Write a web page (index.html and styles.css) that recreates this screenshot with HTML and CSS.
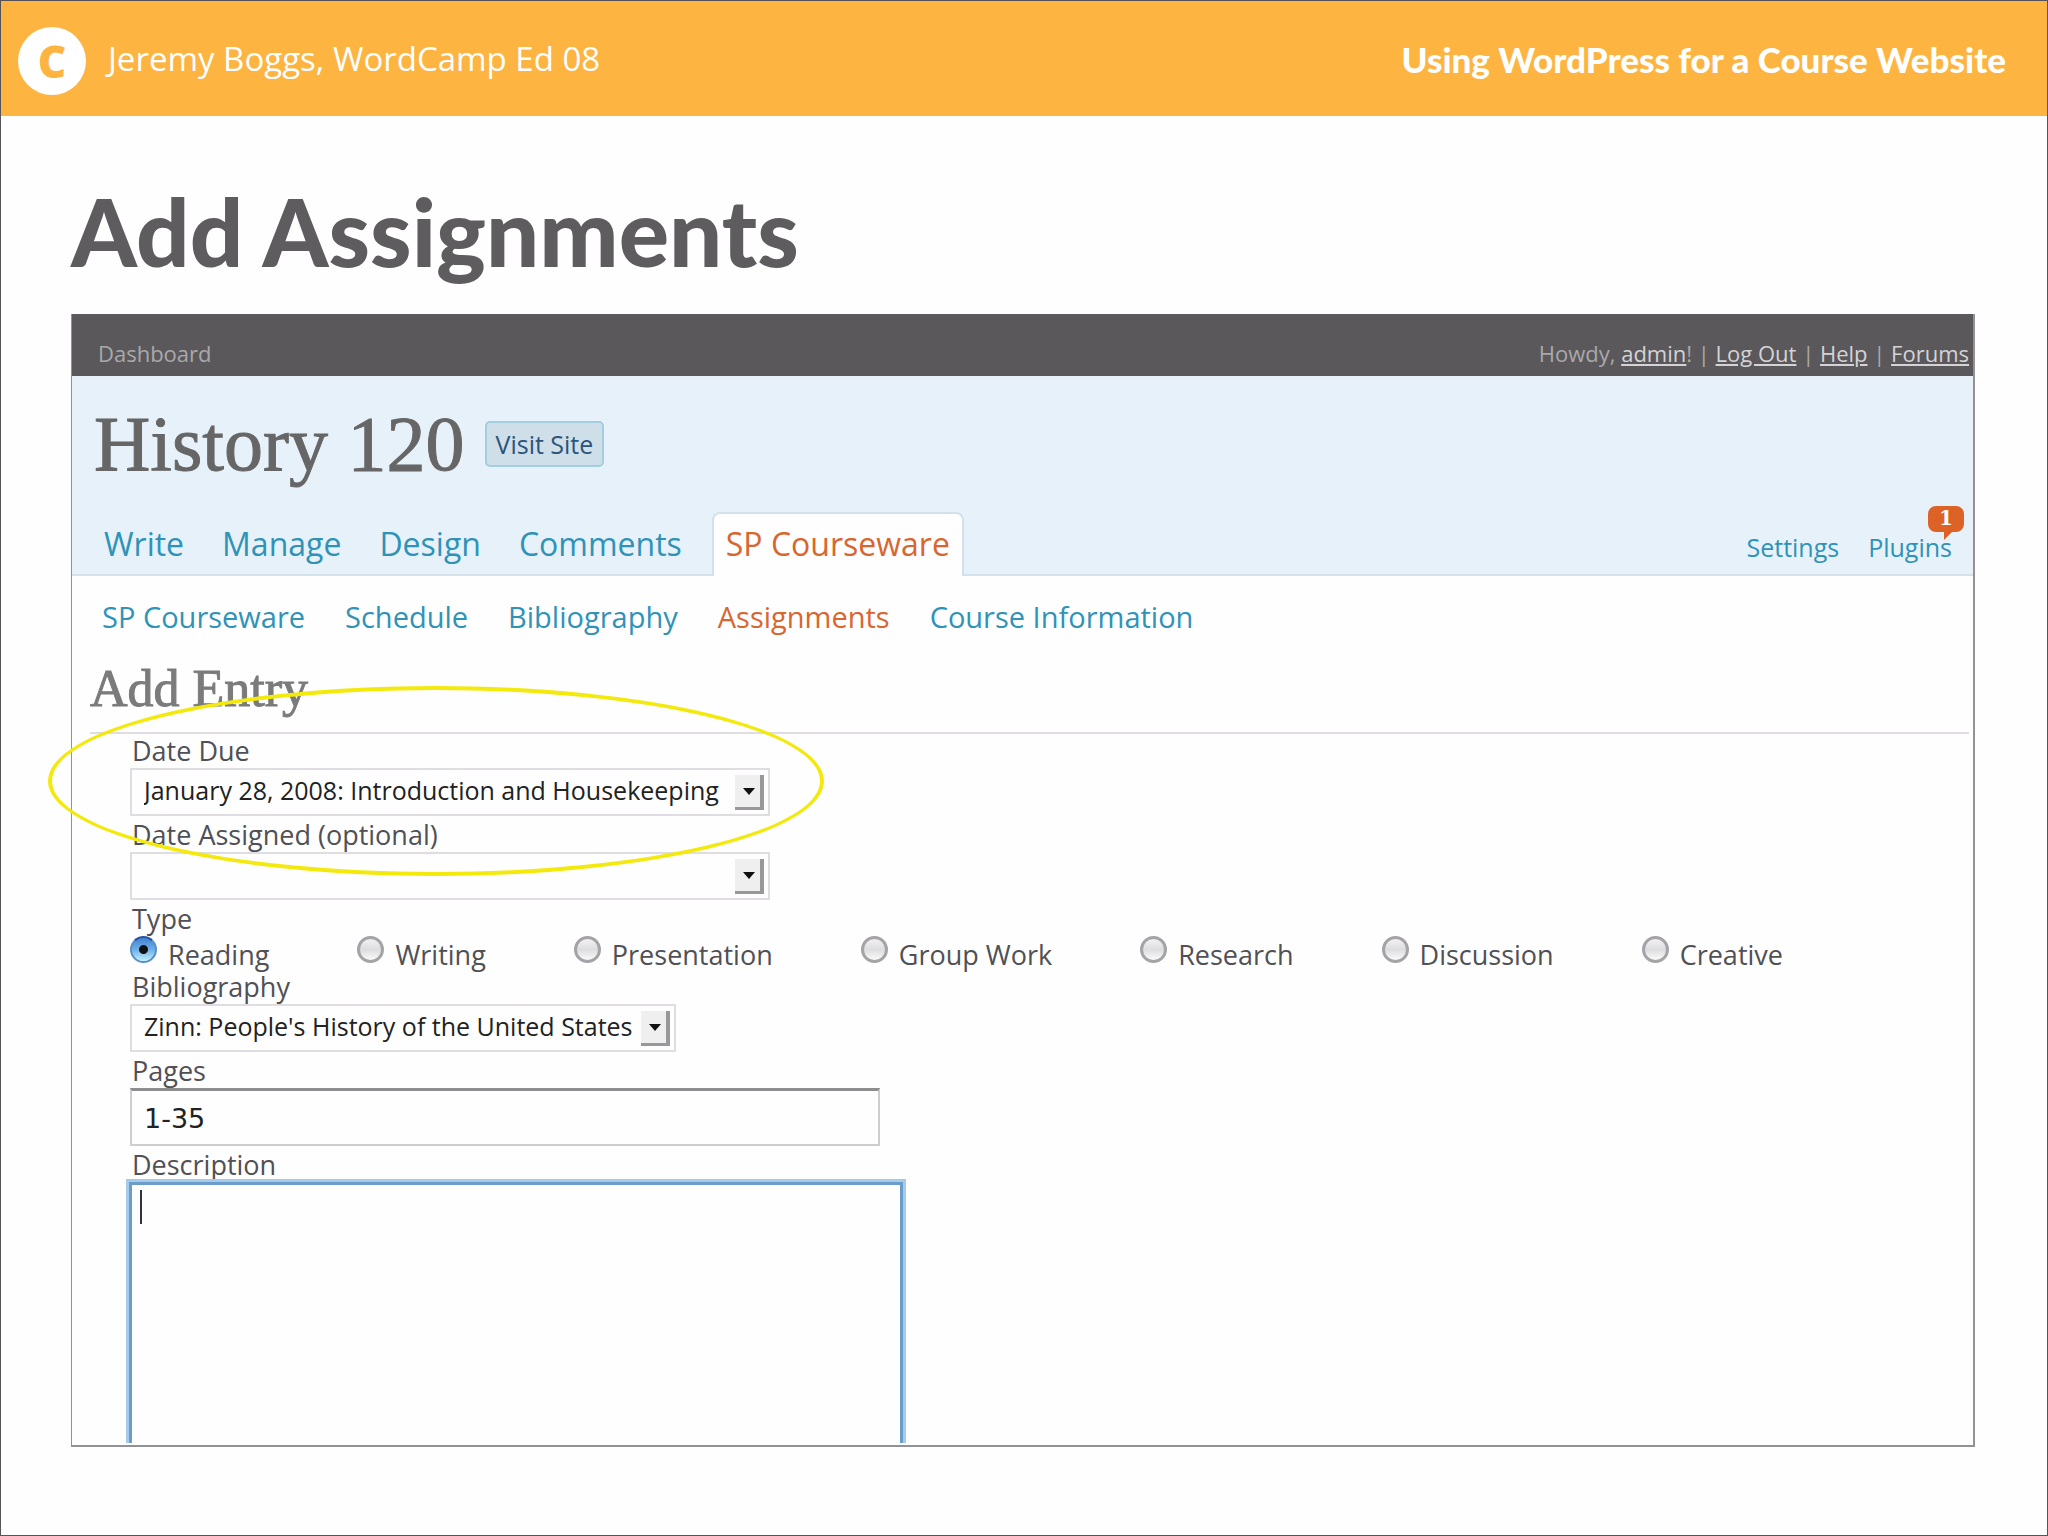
FILE: index.html
```html
<!DOCTYPE html>
<html lang="en">
<head>
  <meta charset="UTF-8"/>
  <meta name="viewport" content="width=device-width,initial-scale=1"/>
  <title>Add Assignments</title>
  <link rel="stylesheet" href="styles.css">
</head>
<body>
  <header class="banner">
    <span class="logo">C</span>
    <p class="speaker">Jeremy Boggs, WordCamp Ed 08</p>
    <p class="talk">Using WordPress for a Course Website</p>
  </header>

  <main class="slide">
    <h1>Add Assignments</h1>

    <div class="screen">
      <div class="topbar">
        <a class="dashboard" href="#">Dashboard</a>
        <p class="user">Howdy, <a href="#">admin</a>! | <a href="#">Log Out</a> | <a href="#">Help</a> | <a href="#">Forums</a></p>
      </div>

      <div class="masthead">
        <div class="site">
          <h2>History 120</h2>
          <button type="button">Visit Site</button>
        </div>
        <nav class="menu">
          <a href="#">Write</a>
          <a href="#">Manage</a>
          <a href="#">Design</a>
          <a href="#">Comments</a>
          <a href="#" class="current">SP Courseware</a>
          <div class="side">
            <a href="#">Settings</a>
            <a href="#" class="plugins">Plugins<span class="badge">1</span></a>
          </div>
        </nav>
      </div>

      <nav class="submenu">
        <a href="#">SP Courseware</a>
        <a href="#">Schedule</a>
        <a href="#">Bibliography</a>
        <a href="#" class="current">Assignments</a>
        <a href="#">Course Information</a>
      </nav>

      <h3>Add Entry</h3>

      <form class="entry">
        <label for="due">Date Due</label>
        <div class="select">
          <select id="due">
            <option>January 28, 2008: Introduction and Housekeeping</option>
          </select>
        </div>

        <label for="assigned">Date Assigned (optional)</label>
        <div class="select">
          <select id="assigned">
            <option></option>
          </select>
        </div>

        <p class="caption" id="typeLabel">Type</p>
        <div class="types" role="radiogroup" aria-labelledby="typeLabel">
          <label><input type="radio" name="type" checked> Reading</label>
          <label><input type="radio" name="type"> Writing</label>
          <label><input type="radio" name="type"> Presentation</label>
          <label><input type="radio" name="type"> Group Work</label>
          <label><input type="radio" name="type"> Research</label>
          <label><input type="radio" name="type"> Discussion</label>
          <label><input type="radio" name="type"> Creative</label>
        </div>

        <label for="biblio">Bibliography</label>
        <div class="select short">
          <select id="biblio">
            <option>Zinn: People's History of the United States</option>
          </select>
        </div>

        <label for="pages">Pages</label>
        <input type="text" id="pages" value="1-35">

        <label for="description">Description</label>
        <div class="editor">
          <textarea id="description"></textarea>
          <span class="caret"></span>
        </div>

        <!-- highlight drawn over the date fields -->
        <div class="highlight"></div>
      </form>
    </div>
  </main>
</body>
</html>
```

FILE: styles.css
```css
:root {
  --orange: #fdb441;
  --heading: #5f5c60;
  --bar: #5a585b;
  --blue: #e7f1fa;
  --link: #2f93b8;
  --active: #d9662f;
  --line: #dfdde2;
  --frame: #929296;
  --text: #505055;
  --edge: #555357;
}

*,
*::before,
*::after {
  box-sizing: border-box;
  margin: 0;
  padding: 0;
}

body {
  display: flex;
  flex-direction: column;
  min-height: 100vh;
  border: 1px solid var(--edge);
  background: #fefefe;
  color: var(--text);
  font-family: "Open Sans", "Noto Sans", sans-serif;
  font-size: 27px;
}

a {
  color: var(--link);
  text-decoration: none;
}

.banner {
  display: flex;
  align-items: center;
  height: 115px;
  padding: 0 41px 0 17px;
  background: var(--orange);
  color: #fff;
  font-size: 33px;
}

.logo {
  display: flex;
  align-items: center;
  justify-content: center;
  width: 68px;
  height: 68px;
  margin: 4px 22px 0 0;
  border-radius: 50%;
  background: #fff;
  color: var(--orange);
  font-size: 44px;
  font-weight: 800;
}

.talk {
  margin-left: auto;
  font-family: Lato, sans-serif;
  font-size: 35px;
  font-weight: 900;
}

.slide {
  flex: 1;
  display: flex;
  flex-direction: column;
  padding: 60px 72px 88px 70px;
}

.slide h1 {
  height: 138px;
  color: var(--heading);
  font-family: Lato, sans-serif;
  font-size: 94px;
  font-weight: 900;
  line-height: 110px;
}

.screen {
  flex: 1;
  display: flex;
  flex-direction: column;
  border: solid var(--frame);
  border-width: 0 2px 2px 1px;
}

.topbar {
  display: flex;
  justify-content: space-between;
  align-items: center;
  height: 62px;
  padding: 16px 4px 0 26px;
  background: var(--bar);
  color: #a9a8aa;
  font-size: 22px;
}

.dashboard {
  color: #a9a8aa;
}

.user a {
  color: #d4d3d5;
  text-decoration: underline;
}

.masthead {
  background: var(--blue);
  border-bottom: 2px solid #d3e1ea;
}

.site {
  display: flex;
  align-items: center;
  gap: 20px;
  height: 136px;
  padding-left: 22px;
}

.site h2 {
  color: #666;
  font-family: "Liberation Serif", serif;
  font-size: 78px;
  font-weight: 400;
  -webkit-text-stroke: 1px #666;
}

.site button {
  height: 46px;
  padding: 0 9px;
  border: 2px solid #a4cde0;
  border-radius: 5px;
  background: #cfdfea;
  color: #2b5579;
  font-family: inherit;
  font-size: 25px;
}

.menu {
  display: flex;
  gap: 38px;
  height: 62px;
  padding: 0 21px 0 32px;
  font-size: 32px;
  font-weight: 500;
  line-height: 64px;
}

.menu .current {
  height: 64px;
  margin-left: -8px;
  padding: 0 12px;
  border: 2px solid #d3e1ea;
  border-bottom: 0;
  border-radius: 8px 8px 0 0;
  background: #fefefe;
  line-height: 60px;
}

.current {
  color: var(--active);
}

.side {
  display: flex;
  gap: 29px;
  margin-left: auto;
  font-size: 25px;
  line-height: 70px;
}

.plugins {
  position: relative;
}

.badge {
  position: absolute;
  top: -6px;
  right: -12px;
  width: 36px;
  height: 26px;
  border-radius: 8px;
  background: #dc6225;
  color: #fff;
  font-family: "DejaVu Serif", serif;
  font-size: 20px;
  font-weight: 700;
  line-height: 25px;
  text-align: center;
}

.badge::after {
  content: "";
  position: absolute;
  top: 25px;
  left: 16px;
  border-top: 9px solid #dc6225;
  border-right: 9px solid transparent;
}

.submenu {
  display: flex;
  gap: 40px;
  padding: 18px 0 0 30px;
  font-size: 29px;
  line-height: 46px;
}

.screen h3 {
  height: 94px;
  margin: 0 4px 0 18px;
  padding-top: 10px;
  border-bottom: 2px solid var(--line);
  color: #7b7b7b;
  font-family: "Liberation Serif", serif;
  font-size: 52px;
  font-weight: 400;
  line-height: 78px;
  -webkit-text-stroke: 1px #7b7b7b;
}

.entry {
  position: relative;
  flex: 1;
  display: flex;
  flex-direction: column;
  align-items: flex-start;
  padding-left: 58px;
}

.entry > label,
.caption {
  height: 34px;
  padding-left: 2px;
  line-height: 34px;
}

.select {
  position: relative;
  width: 640px;
  height: 48px;
  margin-bottom: 2px;
}

.select.short {
  width: 546px;
}

.select select {
  width: 100%;
  height: 100%;
  padding: 0 40px 4px 12px;
  appearance: none;
  border: 2px solid var(--line);
  border-radius: 0;
  background: #fefefe;
  color: #222;
  font-family: inherit;
  font-size: 25px;
}

/* drop-down button and its arrow */
.select::before {
  content: "";
  position: absolute;
  top: 7px;
  right: 6px;
  width: 29px;
  height: 35px;
  border: solid #98979a;
  border-width: 0 4px 3px 0;
  background: #f0eff0;
  pointer-events: none;
}

.select::after {
  content: "";
  position: absolute;
  top: 20px;
  right: 15px;
  border: 6px solid transparent;
  border-top: 7px solid #111;
  border-bottom: 0;
  pointer-events: none;
}

.types {
  display: flex;
  flex-wrap: wrap;
  gap: 0 88px;
}

.types label {
  display: flex;
  gap: 11px;
  height: 34px;
  line-height: 38px;
}

.types input {
  width: 27px;
  height: 27px;
  appearance: none;
  border: 3px solid #a5a3a7;
  border-radius: 50%;
  background: linear-gradient(#f2f1f3, #dddcde 50%, #fbfbfb);
}

.types input:checked {
  border: 2px solid #5b8fc9;
  border-top-color: #2853a8;
  background: radial-gradient(circle, #111 0 4px, transparent 5px), linear-gradient(#4384cf, #6bb0ea 50%, #c3f0fd);
}

.entry input[type="text"] {
  width: 750px;
  height: 58px;
  margin-bottom: 2px;
  padding: 2px 12px 0;
  border: 2px solid #cfcdd1;
  border-top: 3px solid #8d8c8f;
  background: #fefefe;
  color: #222;
  font-family: "DejaVu Sans", sans-serif;
  font-size: 27px;
}

.editor {
  position: relative;
  flex: 1;
  display: flex;
  width: 774px;
  margin-left: -1px;
}

.editor textarea {
  flex: 1;
  padding: 6px 12px;
  border: solid #6c9dca;
  border-width: 3px 3px 0;
  outline: 0;
  background: #fefefe;
  box-shadow: 0 0 0 3px #a5cbea;
  clip-path: inset(-6px -6px 2px);
  resize: none;
}

.caret {
  position: absolute;
  top: 8px;
  left: 11px;
  width: 2px;
  height: 34px;
  background: #333;
}

.highlight {
  position: absolute;
  top: -48px;
  left: -24px;
  width: 776px;
  height: 190px;
  border: 4px solid #f3e90c;
  border-radius: 50%;
  pointer-events: none;
}
```
